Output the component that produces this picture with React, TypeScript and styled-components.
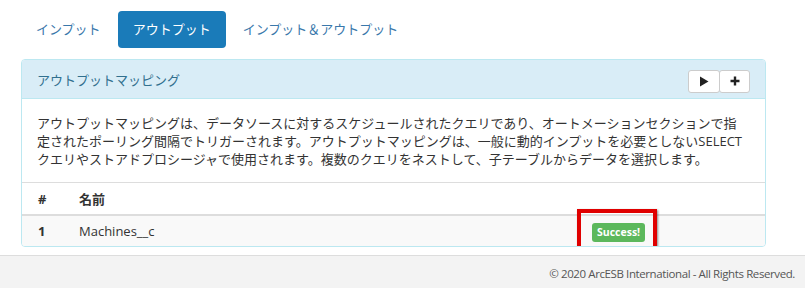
import styled, { createGlobalStyle } from "styled-components";

const GlobalStyle = createGlobalStyle`
  html, body {
    margin: 0;
    padding: 0;
    background: #fff;
  }
  body {
    font-family: "Open Sans", "Noto Sans CJK JP", sans-serif;
    font-size: 13px;
    color: #333;
  }
`;

const tabs = ["インプット", "アウトプット", "インプット＆アウトプット"];

const PlayIcon = () => (
  <svg width="10" height="11" viewBox="0 0 10 11">
    <path d="M1 0.5 L9.5 5.5 L1 10.5 Z" fill="#222" />
  </svg>
);

const PlusIcon = () => (
  <svg width="10" height="10" viewBox="0 0 10 10">
    <path d="M3.8 0.5h2.4v3.3h3.3v2.4H6.2v3.3H3.8V6.2H0.5V3.8h3.3z" fill="#222" />
  </svg>
);

const App = () => {
  const active = 1;

  return (
    <Page>
      <GlobalStyle />
      <Main>
        <Pills>
          {tabs.map((t, i) => (
            <Pill key={t} $active={i === active}>
              {t}
            </Pill>
          ))}
        </Pills>

        <Panel>
          <PanelHeading>
            <PanelTitle>アウトプットマッピング</PanelTitle>
            <BtnGroup>
              <IconBtn $w={32}>
                <PlayIcon />
              </IconBtn>
              <IconBtn $w={31}>
                <PlusIcon />
              </IconBtn>
            </BtnGroup>
          </PanelHeading>
          <PanelBody>
            アウトプットマッピングは、データソースに対するスケジュールされたクエリであり、オートメーションセクションで指
            <br />
            定されたポーリング間隔でトリガーされます。アウトプットマッピングは、一般に動的インプットを必要としないSELECT
            <br />
            クエリやストアドプロシージャで使用されます。複数のクエリをネストして、子テーブルからデータを選択します。
          </PanelBody>

          <HeadRow>
            <Cell $first>#</Cell>
            <Cell>名前</Cell>
            <Cell />
          </HeadRow>
          <BodyRow>
            <Cell $first $bold>
              1
            </Cell>
            <Cell>Machines__c</Cell>
            <StatusCell>
              <Highlight />
              <SuccessLabel>Success!</SuccessLabel>
            </StatusCell>
          </BodyRow>
        </Panel>
      </Main>

      <Footer>© 2020 ArcESB International - All Rights Reserved.</Footer>
    </Page>
  );
};

const Page = styled.div`
  width: 805px;
  height: 288px;
  display: flex;
  flex-direction: column;
  overflow: hidden;
`;

const Main = styled.div`
  padding: 11px 39px 0 21px;
`;

// 상단 탭
const Pills = styled.div`
  display: flex;
  gap: 2px;
  margin-bottom: 11px;
`;

const Pill = styled.div<{ $active?: boolean }>`
  height: 37px;
  line-height: 37px;
  padding: 0 15px;
  border-radius: 4px;
  font-size: 13px;
  color: ${(p) => (p.$active ? "#fff" : "#3a78ab")};
  background: ${(p) => (p.$active ? "#1a7bb9" : "transparent")};
`;

const Panel = styled.div`
  border: 1px solid #bce8f1;
  border-radius: 4px;
  background: #fff;
  overflow: hidden;
`;

const PanelHeading = styled.div`
  height: 38px;
  display: flex;
  align-items: center;
  justify-content: space-between;
  padding: 0 15px;
  background: #d9edf7;
  border-bottom: 1px solid #bce8f1;
`;

const PanelTitle = styled.div`
  font-size: 13px;
  color: #31708f;
  margin-top: 1px;
`;

const BtnGroup = styled.div`
  display: flex;
  margin-top: 4px;
`;

const IconBtn = styled.div<{ $w: number }>`
  width: ${(p) => p.$w}px;
  height: 23px;
  box-sizing: border-box;
  display: flex;
  align-items: center;
  justify-content: center;
  background: #fff;
  border: 1px solid #ccc;
  border-radius: 3px;
  & + & {
    margin-left: -1px;
  }
`;

const PanelBody = styled.div`
  padding: 15px 15px 14px;
  font-size: 13px;
  line-height: 18px;
  color: #333;
  white-space: nowrap;
`;

const Row = styled.div`
  display: grid;
  grid-template-columns: 49px 513px 1fr;
  align-items: center;
`;

const HeadRow = styled(Row)`
  height: 31px;
  border-top: 1px solid #ddd;
  border-bottom: 2px solid #ddd;
  font-weight: bold;
`;

const BodyRow = styled(Row)`
  height: 30px;
  background: #f9f9f9;
`;

const Cell = styled.div<{ $first?: boolean; $bold?: boolean }>`
  padding: 0 8px 0 ${(p) => (p.$first ? "16px" : "8px")};
  font-size: 13px;
  font-weight: ${(p) => (p.$bold ? "bold" : "inherit")};
  color: #333;
`;

const StatusCell = styled.div`
  position: relative;
  padding: 0 8px;
  display: flex;
  align-items: center;
  height: 100%;
`;

// 강조 표시 박스
const Highlight = styled.div`
  position: absolute;
  left: -7px;
  top: -7px;
  width: 80px;
  height: 41px;
  box-sizing: border-box;
  border: 4px solid #e00000;
  box-shadow: 1px 1px 2px rgba(0, 0, 0, 0.45);
`;

const SuccessLabel = styled.span`
  display: inline-block;
  height: 19px;
  line-height: 19px;
  margin-top: 3px;
  padding: 0 5px;
  border-radius: 3px;
  background: #5cb85c;
  color: #fff;
  font-size: 10.5px;
  font-weight: bold;
`;

const Footer = styled.div`
  margin-top: 8px;
  flex: 1;
  border-top: 1px solid #ddd;
  background: #f3f3f3;
  text-align: right;
  padding: 10px 10px 0 0;
  font-size: 11.5px;
  letter-spacing: -0.4px;
  color: #555;
`;

export default App;
